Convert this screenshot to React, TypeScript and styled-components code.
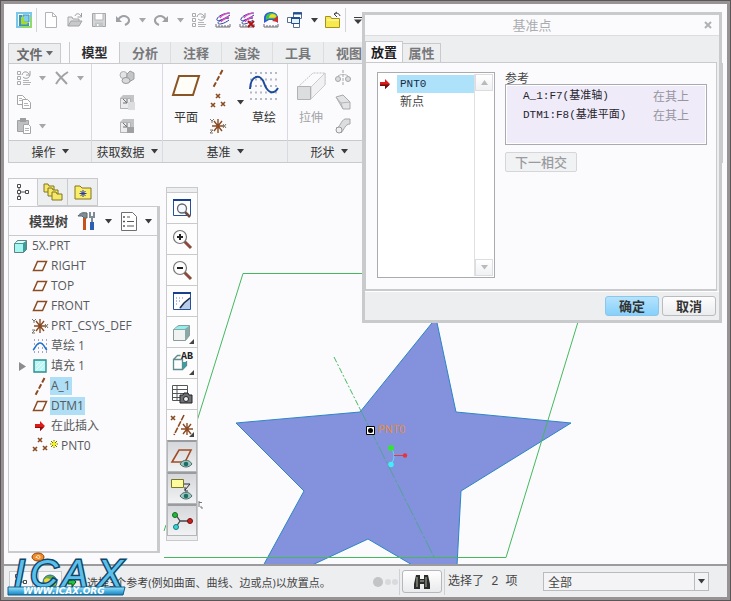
import React, { useState } from "react";
import styled, { createGlobalStyle } from "styled-components";

const GlobalStyle = createGlobalStyle`
  * { box-sizing: border-box; }
  body {
    margin: 0;
    font-family: "Open Sans", "Noto Sans CJK SC", sans-serif;
    font-size: 12px;
    color: #444;
  }
  button { font: inherit; color: inherit; padding: 0; border: 0; background: none; }
  ul { list-style: none; margin: 0; padding: 0; }
`;

const line = "#c8cacc";
const panel = "#edeef0";
const paper = "#fbfbfd";
const brown = "#8a4b22";
const cjk = `"Noto Sans CJK SC", sans-serif`;

/* ---------- window frame ---------- */

const Window = styled.div`
  position: relative;
  min-height: 100vh;
  display: flex;
  border: 1px solid #5a5658;
`;
const Frame = styled.div`
  flex: 1;
  min-width: 0;
  display: flex;
  flex-direction: column;
  border: 3px solid #979395;
  background: ${paper};
`;
const Glyph = styled.svg`
  display: block;
  flex: none;
  overflow: visible;
`;

/* ---------- quick access bar ---------- */

const QuickBar = styled.div`
  display: flex;
  align-items: center;
  height: 32px;
  padding-left: 12px;
  margin-bottom: 6px;
`;
const QuickButton = styled.button<{ $w?: number }>`
  width: ${(p) => p.$w ?? 24}px;
  height: 24px;
  flex: none;
  display: flex;
  align-items: center;
  justify-content: center;
`;
const Rule = styled.span<{ $tight?: boolean }>`
  flex: none;
  width: 1px;
  height: 24px;
  margin: ${(p) => (p.$tight ? "0" : "0 2px 0 4px")};
  background: #d4d5d8;
`;

/* ---------- ribbon ---------- */

const TabRow = styled.div`
  display: flex;
  align-items: flex-end;
  height: 22px;
  margin: 0 4px;
  border-bottom: 1px solid ${line};
  overflow: hidden;
`;
const FileButton = styled.button`
  width: 53px;
  height: 20px;
  display: flex;
  align-items: center;
  justify-content: center;
  gap: 3px;
  margin-right: 8px;
  border: 1px solid ${line};
  border-bottom: 0;
  background: ${panel};
  color: #6a6a6c;
  font: bold 13px/18px ${cjk};
`;
const RibbonTab = styled.button<{ $active?: boolean }>`
  flex: 0 0 51px;
  height: 22px;
  border: solid ${(p) => (p.$active ? line : "#dcdde0")};
  border-width: ${(p) => (p.$active ? "0 1px" : "1px 1px 0 0")};
  background: ${(p) => (p.$active ? paper : panel)};
  color: ${(p) => (p.$active ? "#2e2e30" : "#77787a")};
  font: bold 13px/20px ${cjk};
`;
const Ribbon = styled.div`
  display: flex;
  height: 99px;
  margin: 0 4px;
  border: solid ${line};
  border-width: 0 1px 1px;
`;
const Group = styled.section<{ $w?: number }>`
  ${(p) => (p.$w ? `flex: 0 0 ${p.$w}px;` : "flex: 1;")}
  min-width: 0;
  display: flex;
  flex-direction: column;
  border-right: 1px solid #d9dadd;
`;
const GroupBody = styled.div<{ $center?: boolean }>`
  flex: 1;
  display: flex;
  justify-content: ${(p) => (p.$center ? "center" : "flex-start")};
  padding: ${(p) => (p.$center ? "2px 0 0" : "2px 0 0 6px")};
`;
const GroupLabel = styled.button<{ $w?: number }>`
  width: ${(p) => (p.$w ? `${p.$w}px` : "auto")};
  height: 21px;
  display: flex;
  align-items: center;
  justify-content: center;
  gap: 6px;
  color: #333;
  font: 12px/20px ${cjk};
`;
const LabelBar = styled.div`
  display: grid;
  background: ${panel};
  border-top: 1px solid ${line};
`;
const ShapeLabelBar = styled(LabelBar)`
  justify-content: start;
`;
const Stack = styled.div`
  display: grid;
  grid-auto-rows: 24px;
  align-items: center;
  align-content: start;
`;
const StackRow = styled.div`
  display: flex;
  align-items: center;
`;
const SmallTool = styled.button<{ $w?: number }>`
  width: ${(p) => p.$w ?? 18}px;
  height: 22px;
  display: flex;
  align-items: center;
  justify-content: center;
`;
const BigTool = styled.button<{ $off?: boolean }>`
  width: 34px;
  height: 72px;
  display: flex;
  flex-direction: column;
  align-items: center;
  gap: 8px;
  padding-top: 6px;
  color: ${(p) => (p.$off ? "#a2a3a6" : "#333")};
  font: 12px/18px ${cjk};
`;
const ArrowTool = styled.button`
  width: 14px;
  height: 72px;
  display: flex;
  align-items: center;
  justify-content: center;
`;

/* ---------- workspace ---------- */

const Workspace = styled.div`
  flex: 1;
  display: flex;
  min-height: 401px;
`;
const Sidebar = styled.aside`
  flex: none;
  width: 152px;
  margin: 15px 0 11px 4px;
  display: flex;
  flex-direction: column;
`;
const SideTabs = styled.div`
  display: flex;
  height: 28px;
`;
const SideTab = styled.button<{ $active?: boolean }>`
  width: 30px;
  display: flex;
  align-items: center;
  justify-content: center;
  border: 1px solid ${line};
  border-left-width: ${(p) => (p.$active ? "1px" : "0")};
  border-bottom-color: ${(p) => (p.$active ? paper : line)};
  background: ${(p) => (p.$active ? paper : panel)};
`;
const TreePanel = styled.div`
  flex: 1;
  border: 1px solid ${line};
  border-top: 0;
  border-right-width: 3px;
  border-bottom-width: 2px;
`;
const TreeHead = styled.div`
  display: flex;
  align-items: center;
  height: 30px;
  padding-left: 20px;
  border-top: 1px solid ${line};
  border-bottom: 1px solid ${line};
`;
const TreeTitle = styled.h2`
  flex: none;
  margin: 0 9px 0 0;
  color: #444;
  white-space: nowrap;
  font: bold 13px/20px ${cjk};
`;
const TreeList = styled.ul`
  color: #58595c;
`;
const TreeItem = styled.li<{ $root?: boolean }>`
  height: 20px;
  display: flex;
  align-items: center;
  padding-left: ${(p) => (p.$root ? 4 : 0)}px;
`;
const Expander = styled.button`
  width: 23px;
  height: 16px;
  display: flex;
  align-items: center;
  justify-content: center;
  padding-left: 4px;
`;
const Indent = styled.span`
  width: 23px;
`;
const ItemText = styled.span<{ $sel?: boolean }>`
  margin-left: 2px;
  padding: 0 1px;
  line-height: 18px;
  background: ${(p) => (p.$sel ? "#aedff6" : "transparent")};
`;

const Canvas = styled.main`
  flex: 1;
  min-width: 0;
  display: grid;
  grid-template: minmax(0, 1fr) / minmax(0, 1fr);
  overflow: hidden;
`;
const Scene = styled.svg`
  grid-area: 1 / 1;
  display: block;
  width: 100%;
  height: 100%;
`;
const ViewBar = styled.div`
  grid-area: 1 / 1;
  align-self: start;
  justify-self: start;
  width: 32px;
  margin: 24px 0 0 6px;
  padding: 4px 0;
  border: 1px solid ${line};
  background: ${panel};
`;
const ViewButton = styled.button<{ $on?: boolean }>`
  width: 30px;
  height: ${(p) => (p.$on ? 32 : 31)}px;
  display: flex;
  align-items: center;
  justify-content: center;
  border: ${(p) => (p.$on ? "1px solid #b4b6ba" : "0 solid #c8cacc")};
  border-top: ${(p) => (p.$on ? "2px solid #9a9ca0" : "1px solid #c8cacc")};
  background: ${(p) => (p.$on ? "linear-gradient(#d5d7da, #f1f2f4)" : "#fdfdfe")};
`;

/* ---------- status bar ---------- */

const StatusBar = styled.footer`
  display: flex;
  align-items: center;
  height: 33px;
  border-top: 2px solid #9b9b9d;
  background: ${panel};
`;
const StatusMessage = styled.p`
  flex: 0 0 auto;
  width: 285px;
  margin: 0 0 0 5px;
  white-space: nowrap;
  font-size: 11px;
`;
const StatusRule = styled.span`
  width: 1px;
  height: 26px;
  background: #cfd0d3;
`;
const StatusIcon = styled.button<{ $w: number; $box?: boolean }>`
  width: ${(p) => p.$w}px;
  height: 22px;
  margin-left: ${(p) => (p.$box ? 5 : 0)}px;
  display: flex;
  align-items: center;
  justify-content: center;
  border: ${(p) => (p.$box ? 1 : 0)}px solid ${line};
  background: ${(p) => (p.$box ? "#f8f8fa" : "transparent")};
`;
const FindButton = styled.button`
  width: 40px;
  height: 23px;
  margin: 0 2px;
  display: flex;
  align-items: center;
  justify-content: center;
  border: 1px solid #b5b7ba;
  border-radius: 3px;
  background: linear-gradient(#fff, #e9eaec);
`;
const SelectedCount = styled.span`
  flex: 1;
  padding-left: 3px;
  white-space: nowrap;
  font: 12px/18px "Liberation Mono", ${cjk};
`;
const FilterBox = styled.label`
  display: grid;
  align-items: center;
  width: 166px;
  margin-right: 18px;
`;
const FilterSelect = styled.select`
  grid-area: 1 / 1;
  width: 100%;
  height: 19px;
  padding: 0 20px 0 4px;
  appearance: none;
  border: 1px solid #b9bbbe;
  border-radius: 0;
  background: #f4f4f6;
  color: #444;
  font: 12px/16px ${cjk};
`;
const FilterArrow = styled.span`
  grid-area: 1 / 1;
  justify-self: end;
  width: 15px;
  height: 19px;
  display: flex;
  align-items: center;
  justify-content: center;
  border: 1px solid #b9bbbe;
  background: #f2f3f5;
  pointer-events: none;
`;
const Brand = styled.svg`
  position: absolute;
  left: 4px;
  bottom: 2px;
  overflow: visible;
  pointer-events: none;
`;

/* ---------- datum point dialog ---------- */

const Dialog = styled.section`
  position: absolute;
  top: 11px;
  right: 8px;
  width: 360px;
  display: flex;
  flex-direction: column;
  border: 3px solid ${line};
  background: ${panel};
`;
const DialogTitle = styled.header`
  display: grid;
  align-items: center;
  height: 21px;
  border-bottom: 1px solid #dcdde0;
  background: ${paper};
`;
const DialogName = styled.h1`
  grid-area: 1 / 1;
  justify-self: center;
  margin: 0 20px 0 0;
  color: #aaacaf;
  font: 13px/20px ${cjk};
`;
const CloseButton = styled.button`
  grid-area: 1 / 1;
  justify-self: end;
  width: 22px;
  height: 20px;
  display: flex;
  align-items: center;
  justify-content: center;
`;
const DialogTabs = styled.div`
  display: flex;
  align-items: flex-end;
  height: 26px;
`;
const DialogTab = styled.button<{ $active?: boolean }>`
  width: 38px;
  height: ${(p) => (p.$active ? 21 : 19)}px;
  border: 1px solid ${line};
  border-width: ${(p) => (p.$active ? "1px 1px 0" : "1px 1px 0 0")};
  background: ${(p) => (p.$active ? paper : panel)};
  color: ${(p) => (p.$active ? "#1c1c1e" : "#77787a")};
  font: bold 13px/18px ${cjk};
`;
const DialogBody = styled.div`
  display: flex;
  gap: 10px;
  height: 229px;
  margin: 0 2px 0 0;
  padding: 9px 9px 11px 11px;
  border: 1px solid ${line};
  border-bottom-width: 2px;
  background: ${paper};
`;
const PointList = styled.div`
  flex: none;
  width: 118px;
  display: flex;
  border: 1px solid #a9abae;
  padding: 1px;
  background: #fff;
`;
const Points = styled.ul`
  flex: 1;
`;
const Point = styled.li`
  display: grid;
  grid-template-columns: 18px 1fr;
  align-items: center;
  height: 19px;
  color: #444;
  font: 12px/18px "Liberation Mono", ${cjk};
`;
const PointName = styled.span<{ $sel?: boolean; $mono?: boolean }>`
  padding-left: 3px;
  font-size: ${(p) => (p.$mono ? 11 : 12)}px;
  color: ${(p) => (p.$sel ? "#1b2a44" : "#444")};
  background: ${(p) => (p.$sel ? "#aee2fb" : "transparent")};
`;
const ScrollTrack = styled.div`
  width: 19px;
  display: flex;
  flex-direction: column;
  justify-content: space-between;
  border-left: 1px solid #dfe0e3;
`;
const ScrollButton = styled.button`
  height: 17px;
  display: flex;
  align-items: center;
  justify-content: center;
  border: 1px solid #dcdde0;
  background: linear-gradient(#fff, #f0f1f3);
`;
const RefColumn = styled.div`
  flex: 1;
  display: flex;
  flex-direction: column;
  align-items: flex-start;
  font: 12px/12px ${cjk};
`;
const RefTitle = styled.h3`
  margin: 0;
  color: #444;
  font: 12px/12px ${cjk};
`;
const RefTable = styled.table`
  width: 100%;
  height: 61px;
  margin-bottom: 7px;
  padding: 1px 13px 20px 17px;
  border: 1px solid #a9abae;
  border-spacing: 0;
  background: #efebf8;
  box-shadow: inset 0 0 0 1px #fff;
`;
const RefName = styled.td`
  padding: 0;
  white-space: nowrap;
  color: #26242e;
  font: 11px/18px "Liberation Mono", ${cjk};
`;
const RefKind = styled.td`
  padding: 0;
  width: 40px;
  color: #97959f;
  font: 12px/18px ${cjk};
`;
const NextButton = styled.button`
  width: 72px;
  height: 20px;
  border: 1px solid #d5d6d9;
  border-radius: 2px;
  background: #f1f2f4;
  color: #9a9b9e;
  font: 500 13px/18px ${cjk};
`;
const DialogFooter = styled.footer`
  display: flex;
  justify-content: flex-end;
  align-items: center;
  gap: 3px;
  height: 29px;
  padding-right: 3px;
  border-top: 1px solid #fff;
`;
const DialogButton = styled.button<{ $primary?: boolean }>`
  width: 54px;
  height: 20px;
  border: 1px solid ${(p) => (p.$primary ? "#8cc7ea" : "#b9bbbe")};
  border-radius: 3px;
  background: ${(p) =>
    p.$primary ? "linear-gradient(#b5e3fd, #86d0fb)" : "linear-gradient(#fdfdfe, #ebecee)"};
  color: #333;
  font: bold 13px/18px ${cjk};
`;

/* ---------- icons ---------- */

type IconProps = { children: React.ReactNode; w?: number; h?: number };
const Icon = ({ children, w = 16, h = 16 }: IconProps) => (
  <Glyph width={w} height={h} viewBox={`0 0 ${w} ${h}`} fill="none" aria-hidden="true">
    {children}
  </Glyph>
);
const Down = ({ c = "#3c3c3e" }: { c?: string }) => (
  <Icon w={7} h={5}>
    <path d="M0 0h7L3.500 4.500z" fill={c} />
  </Icon>
);
const AppIcon = () => (
  <Icon>
    <path d="M0 0h16v16H0z" fill="#8edb6a" />
    <path d="M0 0h16v5H5v11H0z" fill="#7cc6ea" />
    <path d="M2 2h12v12H2z" fill="#f2fae8" />
    <path d="M3 3h3v8h7v3H3z" fill="#3d8fc4" />
    <path d="M7 3h6v7H7z" fill="#7fd0f0" stroke="#3d8fc4" />
    <path d="M6.500 5v6h5" stroke="#a6dc28" strokeWidth="3" />
  </Icon>
);
const NewIcon = () => (
  <Icon>
    <path d="M2.500.5h7l4 4v11h-11z" fill="#fff" stroke="#b2b3b5" />
    <path d="M9.500.5v4h4" stroke="#b2b3b5" />
  </Icon>
);
const OpenIcon = () => (
  <Icon>
    <path d="M1 14V5h4l1 2h6v2" fill="#e4e5e6" stroke="#a3a4a6" />
    <path d="M1 14l3-5h11l-3 5z" fill="#c8c9ca" stroke="#a3a4a6" />
    <path d="M8 4c1-3 4-3 6 0m.5-3v4h-4" stroke="#9c9d9f" />
  </Icon>
);
const SaveIcon = () => (
  <Icon>
    <path d="M1.500 1.500h13v13h-13z" fill="#d4d5d7" stroke="#a5a6a8" />
    <path d="M4 1.500h8V8H4z" fill="#fff" stroke="#b4b5b7" />
    <path d="M4 10.500h8v4H4z" fill="#c3c4c6" />
    <path d="M6 12h1.500v2H6z" fill="#fff" />
  </Icon>
);
const Undo = ({ flip }: { flip?: boolean }) => (
  <Icon>
    <g transform={flip ? "matrix(-1 0 0 1 16 0)" : undefined}>
      <path d="M3 8c2-4 6-5 9-3s3 6-2 8" stroke="#9fa0a3" strokeWidth="2" />
      <path d="M1 4v6h6z" fill="#9fa0a3" />
    </g>
  </Icon>
);
const RegenIcon = () => (
  <Icon>
    <path d="M1.500 1.500h3v3h-3zM1.500 6.500h3v3h-3zM1.500 11.500h3v3h-3z" stroke="#a9aaac" />
    <path d="M7 10.500h6M7 12.500h8M7 14.500h7" stroke="#b3b4b6" />
    <path d="M6 5c1-4 5-4 7-1m1-3v4h-4M14 5c-1 4-5 4-7 2" stroke="#9b9c9f" />
  </Icon>
);
const SketchView = ({ off }: { off?: boolean }) => (
  <Icon>
    <path d="M15 1C9 1 3 4 2 7s4 2 13-4M14 6C8 7 3 9 3 11s6 1 11-3" stroke="#2d3f9e" />
    <path d="M14 1c-5 1-8 3-9 5m9-1c-4 1-7 3-8 5" stroke="#d94bc4" strokeWidth="1.500" />
    <path d="M1 12v3h14v-3M4 15v-2M7 15v-2M10 15v-2M13 15v-2" stroke="#6c6d72" />
    {off && <path d="M9 9l6 6M15 9l-6 6" stroke="#b01010" strokeWidth="2" />}
  </Icon>
);
const ColorIcon = () => (
  <Icon>
    <path d="M1 11V6c0-8 14-8 14 0v5l-4-3H6z" fill="#3559d8" />
    <path d="M3 8C1 0 12-1 14 4c-1 5-7 1-11 4z" fill="#38c74c" />
    <path d="M6 6c0-5 6-5 7-2 0 3-5 1-7 2z" fill="#f0dc2c" />
    <path d="M9 9l6-5v6z" fill="#d82c2c" />
    <path d="M1 12v3h14v-3M4 15v-2M7 15v-2M10 15v-2M13 15v-2" stroke="#6c6d72" />
  </Icon>
);
const WindowsIcon = () => (
  <Icon>
    <path d="M6.500.5h8v6h-8zM.5 5.500h8v5h-8zM6.500 9.500h6v6h-6z" fill="#fff" stroke="#5a6d8f" />
    <path d="M4.500 5.500h8v6h-8z" fill="#e7f1fb" stroke="#1f4f96" />
    <path d="M4 6h9M6 1.500h9" stroke="#1f4f96" strokeWidth="2" />
  </Icon>
);
const FolderUp = () => (
  <Icon>
    <path d="M.5 15.500v-11h5l1 2h8v9z" fill="#f7ea4e" stroke="#a59120" />
    <path d="M2 8h12" stroke="#fffbb8" />
    <path d="M15 4c-1-3-3-3-5-2m2-2l-3 2 3 3" stroke="#3f3f3f" />
  </Icon>
);
const OverflowIcon = () => (
  <Icon w={8} h={7}>
    <path d="M0 2.500h8L4 7z" fill="#3c3c3e" />
    <path d="M0 .5h8" stroke="#3c3c3e" />
  </Icon>
);
const DeleteIcon = () => (
  <Icon>
    <path d="M2 2l11 12M14 2C9 5 5 9 2 14" stroke="#a1a2a5" strokeWidth="2" />
  </Icon>
);
const CopyIcon = () => (
  <Icon>
    <path d="M1.500 1.500h5l3 3v6h-8z" fill="#fff" stroke="#a4a5a7" />
    <path d="M6.500 5.500h5l3 3v6h-8z" fill="#fff" stroke="#a4a5a7" />
    <path d="M3 4.500h3M3 6.500h3M8 9.500h4M8 11.500h5" stroke="#b4b5b7" />
  </Icon>
);
const PasteIcon = () => (
  <Icon>
    <path d="M1.500 2.500h11v11h-11z" fill="#bfc0c2" stroke="#a0a1a3" />
    <path d="M4 0h6v4H4z" fill="#9d9ea0" />
    <path d="M7.500 6.500h5l2 2v7h-7z" fill="#fff" stroke="#a4a5a7" />
    <path d="M9 10.500h4M9 12.500h4" stroke="#b4b5b7" />
  </Icon>
);
const ShapesIcon = () => (
  <Icon>
    <circle cx="4.500" cy="5" r="3.500" fill="#e3e4e6" stroke="#aeafb1" />
    <path d="M8 4l3-3 4 2v6l-5 3-2-2z" fill="#c4c5c7" stroke="#9c9d9f" />
    <ellipse cx="7" cy="10.500" rx="4" ry="3" fill="#d8d9db" stroke="#98999b" />
  </Icon>
);
const ImportIcon = ({ solid }: { solid?: boolean }) => (
  <Icon>
    <path d="M1 4l3-3h11v11l-3 3H1z" fill="#c3c4c6" />
    <path d="M1.500 4.500h10v10h-10z" fill="#ececee" stroke="#b2b3b5" />
    <path d={solid ? "M8 9h7v6H8z" : "M9 8h7v8H9z"} fill={solid ? "#9fa0a2" : "#dcdddf"} />
    <path d="M4 5l4 4m0-4v4H4" stroke="#707174" />
  </Icon>
);
const PlaneLarge = () => (
  <Icon w={30} h={28}>
    <path d="M8 4h20l-6 19H2z" fill="#fffdf7" stroke="#8a5424" strokeWidth="2" />
  </Icon>
);
const AxisIcon = ({ c = brown }: { c?: string }) => (
  <Icon>
    <path d="M12.500 0L3.500 17" stroke={c} strokeWidth="2" strokeDasharray="5 2" />
  </Icon>
);
const PointsIcon = () => (
  <Icon>
    <path d="M6 0l4 4m0-4L6 4M1 9l4 4m0-4l-4 4M11 8l4 4m0-4l-4 4" stroke={brown} strokeWidth="1.600" />
  </Icon>
);
const CsysIcon = () => (
  <Icon>
    <path d="M8 1v14M2 8h12M4 3l8 10M12 3L4 13" stroke={brown} strokeWidth="1.400" />
    <path d="M0 1l2 2 2-2M2 3v2M0 12h3l-3 3h3M13 6l3 4m0-4l-3 4" stroke="#7b7367" />
  </Icon>
);
const SketchLarge = () => (
  <Icon w={30} h={28}>
    <g fill="#b4bac6">
      {[0, 1, 2, 3, 4].map((r) =>
        [0, 1, 2, 3, 4, 5].map((c) => (
          <path key={`${r}-${c}`} d={`M${1 + c * 5} ${r * 6.5}h2v2h-2z`} />
        )),
      )}
    </g>
    <path d="M1 17C2 2 12 2 15 11s9 13 14 5" stroke="#1e4a9c" strokeWidth="2" />
  </Icon>
);
const ExtrudeLarge = () => (
  <Icon w={30} h={28}>
    <path d="M2 15L17 1h12v12L15 27" stroke="#bdbec0" strokeDasharray="2 1" />
    <path d="M15 15L29 1v12L15 27z" fill="#f1f1f3" stroke="#cbccce" />
    <path d="M1.500 14.500h13v13h-13z" fill="#dcdddf" stroke="#b1b2b4" />
  </Icon>
);
const RevolveIcon = () => (
  <Icon>
    <path d="M8 0v16" stroke="#a4a5a7" strokeDasharray="3 1" />
    <circle cx="3" cy="9" r="2.500" fill="#dcdddf" stroke="#a4a5a7" />
    <circle cx="13" cy="9" r="2.500" fill="#dcdddf" stroke="#a4a5a7" />
    <path d="M3 6c2-2 8-2 10 0" stroke="#b4b5b7" />
  </Icon>
);
const BlendIcon = () => (
  <Icon>
    <path d="M1 3l7-2 7 7v7H8z" fill="#e2e3e5" stroke="#a8a9ab" />
    <path d="M1 3l5 6 9-1M6 9l2 6" stroke="#b4b5b7" />
  </Icon>
);
const SweepIcon = () => (
  <Icon>
    <path d="M1 10C5 10 6 2 10 1h5v5c-5 0-6 6-9 9z" fill="#dcdddf" stroke="#a4a5a7" />
    <circle cx="4" cy="12" r="3" fill="#efeff1" stroke="#97989a" />
  </Icon>
);
const TreeTabIcon = () => (
  <Icon>
    <path d="M2.500.5h3v3h-3zM2.500 6.500h3v3h-3zM2.500 12.500h3v3h-3zM10.500 6.500h3v3h-3z" fill="#fff" stroke="#4a4a4c" />
    <path d="M4 4v2.500M4 9.500v3M6 8h4" stroke="#4a4a4c" />
  </Icon>
);
const FoldersIcon = () => (
  <Icon w={20} h={20}>
    {[0, 4, 8].map((o) => (
      <path key={o} d={`M${1 + o} ${10 + o}V${2 + o}h4l1 2h5v6z`} fill="#f4e96a" stroke="#84741f" />
    ))}
  </Icon>
);
const FavouriteIcon = () => (
  <Icon w={18} h={16}>
    <path d="M1 15V2h5l2 2h9v11z" fill="#f8ee68" stroke="#84741f" />
    <path d="M9 6v7M5.500 9.500h7M6.500 7l5 5M11.500 7l-5 5" stroke="#2736a8" />
  </Icon>
);
const ToolsIcon = () => (
  <Icon w={20} h={20}>
    <path d="M1 5c2-3 5-4 9-3v5H7L5 5z" fill="#7d8f93" stroke="#57676b" />
    <path d="M7.500 7v12" stroke="#c4541c" strokeWidth="3" />
    <path d="M13 1v5h4V1" stroke="#7e8b94" strokeWidth="2" />
    <path d="M15 6v6" stroke="#7e8b94" strokeWidth="2" />
    <path d="M15 11v8" stroke="#2a5fb4" strokeWidth="4" />
  </Icon>
);
const ListIcon = () => (
  <Icon w={16} h={19}>
    <path d="M.5.5h11l4 4v14H.5z" fill="#fff" stroke="#6d6e70" />
    <path d="M6 5h3M6 9.500h7M6 14h7" stroke="#55565a" />
    <path d="M2.500 4.500h1v1h-1zM2.500 9h1v1h-1zM2.500 13.500h1v1h-1z" stroke="#55565a" />
  </Icon>
);
const PartIcon = () => (
  <Icon>
    <path d="M1.500 5.500l3-3h9v9l-3 3h-9z" fill="#3f9a98" stroke="#5f8384" />
    <path d="M2 6h8v8H2z" fill="#a6f6f2" />
    <path d="M2 5l3-2h8l-3 2z" fill="#e3ffff" />
  </Icon>
);
const PlaneIcon = () => (
  <Icon>
    <path d="M5.500 3.500h9l-4 9h-9z" stroke={brown} strokeWidth="1.500" />
  </Icon>
);
const SketchIcon = () => (
  <Icon>
    <path d="M2 2h14M2 6h14M2 10h14M2 14h14" stroke="#4b5a78" strokeDasharray="1 3" />
    <path d="M1 12c2-1 3-7 7-7s5 6 7 7" stroke="#1e6fd0" strokeWidth="1.600" />
  </Icon>
);
const FillIcon = () => (
  <Icon>
    <path d="M2 2h12v12H2z" fill="#b9f6f4" stroke="#2b8d90" strokeWidth="1.400" />
    <path d="M4 8l4-4M4 12l8-8M8 12l4-4" stroke="#e6ffff" />
  </Icon>
);
const RedArrow = () => (
  <Icon w={12} h={12}>
    <path d="M1 4h5V1l5 5-5 5V8H1z" fill="#e01818" />
    <path d="M1 6.500h10L6 11V8H1z" fill="#6a1010" />
  </Icon>
);
const InsertArrow = () => (
  <Icon>
    <path d="M3 6h5V3l5 5-5 5v-3H3z" fill="#e01818" />
    <path d="M3 9h9l-4 4v-3H3z" fill="#8a1010" />
  </Icon>
);
const Spark = () => (
  <Icon w={10} h={14}>
    <path d="M6 1v8M2 5h8M3 2l6 6M9 2L3 8" stroke="#6d6b10" />
    <path d="M6 2v6M3 5h6" stroke="#f4f01c" strokeWidth="2" />
  </Icon>
);

const Lens = ({ sign }: { sign?: string }) => (
  <Icon w={20} h={20}>
    <path d="M12 12l7 7" stroke="#8a4a3c" strokeWidth="3" />
    <circle cx="8" cy="8" r="6.500" fill="#fdfdfd" stroke="#77777a" strokeWidth="1.200" />
    <path d={sign} stroke="#222" strokeWidth="2" />
  </Icon>
);
const FitIcon = () => (
  <Icon w={20} h={20}>
    <path d="M1.500 2.500h17v15h-17z" fill="#fff" stroke="#26509c" />
    <path d="M1 2h18" stroke="#17408f" strokeWidth="2" />
    <path d="M13 14l5 5" stroke="#6d4a3c" strokeWidth="2.500" />
    <circle cx="10" cy="10.500" r="4.500" fill="#f4f8ff" stroke="#66676b" strokeWidth="1.300" />
  </Icon>
);
const RepaintIcon = () => (
  <Icon w={20} h={20}>
    <path d="M1.500 2.500h17v16h-17z" fill="#fff" stroke="#26509c" />
    <path d="M1 2h18" stroke="#17408f" strokeWidth="2" />
    <path d="M7 18L18 6v12z" fill="#b8cde8" />
    <path d="M8 17l4-5 6-5" stroke="#1b2c50" strokeWidth="1.600" />
    <path d="M4 7h8M4 10h6M4 13h3" stroke="#5f83b8" strokeDasharray="1 2" />
  </Icon>
);
const Corner = () => <path d="M24 19v5h-5z" fill="#444" />;
const CubeIcon = () => (
  <Icon w={24} h={24}>
    <path d="M3.500 9.500l5-4h11v10l-4 5h-12z" fill="#8aa8a8" stroke="#8b9c9e" />
    <path d="M4 10h11v10H4z" fill="#f1f3f3" />
    <path d="M4 9l5-3h10l-4 3z" fill="#8ff0ee" />
    <Corner />
  </Icon>
);
const NamedViewIcon = () => (
  <Icon w={24} h={24}>
    <path d="M3.500 8.500h9v10h-9zM3.500 8.500l4-4h3M12.500 18.500l4-4V10" fill="none" stroke="#5f8c90" strokeWidth="1.300" />
    <path d="M13 18l3-3v-4h-3z" fill="#3a9fa0" />
    <text x="11" y="8" fontFamily="Liberation Mono" fontWeight="bold" fontSize="10" fill="#222">AB</text>
    <Corner />
  </Icon>
);
const CaptureIcon = () => (
  <Icon w={22} h={22}>
    <path d="M1.500 2.500h15v15h-15zM1.500 6.500h15M1.500 10.500h15M1.500 14.500h15M6 2.500v15" fill="#fff" stroke="#55565a" />
    <path d="M9 12h3l1-2h4l1 2h3v8H9z" fill="#6f7073" stroke="#222" />
    <circle cx="15" cy="16" r="2.500" fill="#f2f2f2" stroke="#222" />
  </Icon>
);
const DatumIcon = () => (
  <Icon w={24} h={24}>
    <path d="M1 3l4 4m0-4L1 7M14 2L4 22" stroke={brown} strokeWidth="1.600" strokeDasharray="6 1" />
    <path d="M17 10v12M11 16h12M13 11l8 10M21 11l-8 10" stroke={brown} strokeWidth="1.400" />
    <Corner />
  </Icon>
);
const Eye = () => (
  <g>
    <path d="M10 19c3-5 9-5 12 0-3 4-9 4-12 0z" fill="#9bc7c0" stroke="#4f6c68" />
    <circle cx="16" cy="19" r="2.300" fill="#1d6d66" />
  </g>
);
const PlaneViewIcon = () => (
  <Icon w={24} h={24}>
    <path d="M9 5h12l-6 12H2z" stroke="#a04c26" strokeWidth="1.600" />
    <Eye />
  </Icon>
);
const NoteViewIcon = () => (
  <Icon w={24} h={24}>
    <path d="M1.500 2.500h12v8h-12z" fill="#fdfb9c" stroke="#77762c" />
    <path d="M14 7h6l-5 6m0-3v4h3" stroke="#2c2c2e" />
    <Eye />
  </Icon>
);
const SpinIcon = () => (
  <Icon w={24} h={24}>
    <path d="M6 6l4 6-4 6M10 12h10" stroke="#44484c" strokeWidth="1.300" />
    <circle cx="5" cy="6" r="2.500" fill="#22b83a" stroke="#146b22" />
    <circle cx="6" cy="18" r="2.500" fill="#35d6dc" stroke="#187a7e" />
    <circle cx="20" cy="12" r="2.500" fill="#cc1f1f" stroke="#701010" />
  </Icon>
);
const Binoculars = () => (
  <Icon w={18} h={16}>
    <path d="M3 1h4v4h4V1h4l2 9v5h-6v-5H7v5H1v-5z" fill="#2b2d2a" />
    <path d="M4 3v10M13 3v10" stroke="#aeb3a4" />
    <path d="M7 7h4" stroke="#73786c" strokeWidth="2" />
  </Icon>
);

/* ---------- sections ---------- */

const quickTools = [
  { name: "新建", icon: <NewIcon /> },
  { name: "打开", icon: <OpenIcon /> },
  { name: "保存", icon: <SaveIcon /> },
  { name: "撤消", icon: <Undo /> },
  { name: "撤消列表", icon: <Down c="#a6a7aa" />, w: 14 },
  { name: "重做", icon: <Undo flip /> },
  { name: "重做列表", icon: <Down c="#a6a7aa" />, w: 14 },
  { name: "重新生成", icon: <RegenIcon /> },
  { name: "草绘视图", icon: <SketchView /> },
  { name: "关闭草绘视图", icon: <SketchView off /> },
  { name: "外观", icon: <ColorIcon /> },
  { name: "窗口", icon: <WindowsIcon /> },
  { name: "窗口列表", icon: <Down />, w: 14 },
  { name: "关闭", icon: <FolderUp /> },
];

const Quick = () => (
  <QuickBar>
    <AppIcon />
    <Rule />
    {quickTools.map((q) => (
      <QuickButton key={q.name} aria-label={q.name} $w={q.w}>
        {q.icon}
      </QuickButton>
    ))}
    <Rule $tight />
    <QuickButton aria-label="自定义">
      <OverflowIcon />
    </QuickButton>
  </QuickBar>
);

const gray = "#a6a7aa";

const RibbonArea = () => (
  <>
    <TabRow>
      <FileButton>
        文件
        <Down c="#6a6a6c" />
      </FileButton>
      {["模型", "分析", "注释", "渲染", "工具", "视图"].map((t, i) => (
        <RibbonTab key={t} $active={i === 0}>
          {t}
        </RibbonTab>
      ))}
    </TabRow>
    <Ribbon>
      <Group $w={83}>
        <GroupBody>
          <Stack>
            <StackRow>
              <SmallTool aria-label="重新生成"><RegenIcon /></SmallTool>
              <SmallTool aria-label="重新生成选项"><Down c={gray} /></SmallTool>
              <SmallTool aria-label="删除" $w={22}><DeleteIcon /></SmallTool>
              <SmallTool aria-label="删除选项" $w={14}><Down c={gray} /></SmallTool>
            </StackRow>
            <StackRow>
              <SmallTool aria-label="复制"><CopyIcon /></SmallTool>
            </StackRow>
            <StackRow>
              <SmallTool aria-label="粘贴"><PasteIcon /></SmallTool>
              <SmallTool aria-label="粘贴选项"><Down c={gray} /></SmallTool>
            </StackRow>
          </Stack>
        </GroupBody>
        <LabelBar><GroupLabel>操作<Down /></GroupLabel></LabelBar>
      </Group>
      <Group $w={71}>
        <GroupBody $center>
          <Stack>
            <SmallTool aria-label="用户定义特征"><ShapesIcon /></SmallTool>
            <SmallTool aria-label="复制几何"><ImportIcon /></SmallTool>
            <SmallTool aria-label="收缩包络"><ImportIcon solid /></SmallTool>
          </Stack>
        </GroupBody>
        <LabelBar><GroupLabel>获取数据<Down /></GroupLabel></LabelBar>
      </Group>
      <Group $w={125}>
        <GroupBody>
          <BigTool><PlaneLarge />平面</BigTool>
          <Stack>
            <SmallTool aria-label="轴" $w={30}><AxisIcon /></SmallTool>
            <SmallTool aria-label="点" $w={30}><PointsIcon /></SmallTool>
            <SmallTool aria-label="坐标系" $w={30}><CsysIcon /></SmallTool>
          </Stack>
          <ArrowTool aria-label="点选项"><Down /></ArrowTool>
          <BigTool><SketchLarge />草绘</BigTool>
        </GroupBody>
        <LabelBar><GroupLabel>基准<Down /></GroupLabel></LabelBar>
      </Group>
      <Group>
        <GroupBody>
          <BigTool $off><ExtrudeLarge />拉伸</BigTool>
          <Stack>
            <SmallTool aria-label="旋转" $w={30}><RevolveIcon /></SmallTool>
            <SmallTool aria-label="混合" $w={30}><BlendIcon /></SmallTool>
            <SmallTool aria-label="扫描" $w={30}><SweepIcon /></SmallTool>
          </Stack>
          <ArrowTool aria-label="混合选项"><Down c={gray} /></ArrowTool>
        </GroupBody>
        <ShapeLabelBar><GroupLabel $w={82}>形状<Down /></GroupLabel></ShapeLabelBar>
      </Group>
    </Ribbon>
  </>
);

const treeRows = [
  { text: "RIGHT", icon: <PlaneIcon /> },
  { text: "TOP", icon: <PlaneIcon /> },
  { text: "FRONT", icon: <PlaneIcon /> },
  { text: "PRT_CSYS_DEF", icon: <CsysIcon /> },
  { text: "草绘 1", icon: <SketchIcon /> },
  { text: "填充 1", icon: <FillIcon />, expand: true },
  { text: "A_1", icon: <AxisIcon />, sel: true },
  { text: "DTM1", icon: <PlaneIcon />, sel: true },
  { text: "在此插入", icon: <InsertArrow /> },
  { text: "PNT0", icon: <PointsIcon />, spark: true },
];

const ModelTree = () => (
  <Sidebar>
    <SideTabs>
      <SideTab $active aria-label="模型树"><TreeTabIcon /></SideTab>
      <SideTab aria-label="文件夹浏览器"><FoldersIcon /></SideTab>
      <SideTab aria-label="收藏夹"><FavouriteIcon /></SideTab>
    </SideTabs>
    <TreePanel>
      <TreeHead>
        <TreeTitle>模型树</TreeTitle>
        <QuickButton aria-label="设置" $w={20}><ToolsIcon /></QuickButton>
        <QuickButton aria-label="设置选项" $w={22}><Down /></QuickButton>
        <QuickButton aria-label="显示" $w={20}><ListIcon /></QuickButton>
        <QuickButton aria-label="显示选项" $w={18}><Down /></QuickButton>
      </TreeHead>
      <TreeList>
        <TreeItem $root>
          <PartIcon />
          <ItemText>5X.PRT</ItemText>
        </TreeItem>
        {treeRows.map((r) => (
          <TreeItem key={r.text}>
            {r.expand ? (
              <Expander aria-label="展开">
                <Icon w={7} h={9}><path d="M0 0l7 4.500L0 9z" fill="#8b8c8f" /></Icon>
              </Expander>
            ) : (
              <Indent />
            )}
            {r.icon}
            {r.spark && <Spark />}
            <ItemText $sel={r.sel}>{r.text}</ItemText>
          </TreeItem>
        ))}
      </TreeList>
    </TreePanel>
  </Sidebar>
);

const viewTools = [
  { name: "重新调整", icon: <FitIcon /> },
  { name: "放大", icon: <Lens sign="M8 5v6M5 8h6" /> },
  { name: "缩小", icon: <Lens sign="M5 8h6" /> },
  { name: "重画", icon: <RepaintIcon /> },
  { name: "显示样式", icon: <CubeIcon /> },
  { name: "已命名视图", icon: <NamedViewIcon /> },
  { name: "视图管理器", icon: <CaptureIcon /> },
  { name: "基准显示", icon: <DatumIcon /> },
  { name: "平面显示", icon: <PlaneViewIcon />, on: true },
  { name: "注释显示", icon: <NoteViewIcon />, on: true },
  { name: "旋转中心", icon: <SpinIcon />, on: true },
];

const Model = () => (
  <Scene viewBox="160 163 567 401" preserveAspectRatio="xMinYMin slice" fill="none">
    <path
      d="M436 318L456 412L571 423L461 491L457 566H414L368 539L310 566H263L304 491L236 423L360 412z"
      fill="#8491dc"
      stroke="#2c86c4"
    />
    <path d="M164 557.500H506L596 263M164 531l2-6M190 443.500L243 273.500H600" stroke="#43b95e" />
    <path d="M334 357l26 52" stroke="#43b95e" strokeDasharray="6 2 2 2" />
    <path d="M360 409l74 148" stroke="#4fa493" strokeDasharray="14 2 3 2" />
    <path d="M366.500 426.500h8v8h-8z" fill="#fff" stroke="#000" />
    <circle cx="370.500" cy="430.500" r="2.500" fill="#000" />
    <text x="378" y="433" fontFamily="Open Sans" fontSize="11" fill="#ee8a2c">PNT0</text>
    <path d="M391 448c4 5 4 11 0 16" stroke="#5fdcf2" />
    <path d="M394 455.500h11" stroke="#e23a44" />
    <circle cx="391" cy="448" r="3" fill="#35e23c" />
    <circle cx="391" cy="464.500" r="2.700" fill="#42eefc" />
    <circle cx="405" cy="455.500" r="2.200" fill="#e8333d" />
    <path d="M199 501v6M199 502.500h3M201 506v2h2" stroke="#77787a" />
  </Scene>
);

const PlacementDialog = () => {
  const [tab, setTab] = useState(0);
  return (
    <Dialog role="dialog" aria-label="基准点">
      <DialogTitle>
        <DialogName>基准点</DialogName>
        <CloseButton aria-label="关闭">
          <Icon w={8} h={8}><path d="M1 1l6 6M7 1L1 7" stroke="#b0b1b4" strokeWidth="2" /></Icon>
        </CloseButton>
      </DialogTitle>
      <DialogTabs>
        {["放置", "属性"].map((t, i) => (
          <DialogTab key={t} $active={tab === i} onClick={() => setTab(i)}>
            {t}
          </DialogTab>
        ))}
      </DialogTabs>
      <DialogBody>
        <PointList>
          <Points>
            <Point>
              <RedArrow />
              <PointName $sel $mono>PNT0</PointName>
            </Point>
            <Point>
              <span />
              <PointName>新点</PointName>
            </Point>
          </Points>
          <ScrollTrack>
            <ScrollButton aria-label="向上">
              <Icon w={7} h={5}><path d="M0 5h7L3.500 0z" fill="#b9babd" /></Icon>
            </ScrollButton>
            <ScrollButton aria-label="向下"><Down c="#b9babd" /></ScrollButton>
          </ScrollTrack>
        </PointList>
        <RefColumn>
          <RefTitle id="refs">参考</RefTitle>
          <RefTable aria-labelledby="refs">
            <tbody>
              <tr>
                <RefName>A_1:F7(基准轴)</RefName>
                <RefKind>在其上</RefKind>
              </tr>
              <tr>
                <RefName>DTM1:F8(基准平面)</RefName>
                <RefKind>在其上</RefKind>
              </tr>
            </tbody>
          </RefTable>
          <NextButton disabled>下一相交</NextButton>
        </RefColumn>
      </DialogBody>
      <DialogFooter>
        <DialogButton $primary>确定</DialogButton>
        <DialogButton>取消</DialogButton>
      </DialogFooter>
    </Dialog>
  );
};

const BrandLogo = () => (
  <Brand width="124" height="46" viewBox="5 551 124 46" role="img" aria-label="ICAX">
    <defs>
      <linearGradient id="tube" x1="0" y1="0" x2="0" y2="1">
        <stop offset="0" stopColor="#a6e2fa" />
        <stop offset="0.500" stopColor="#4bb4e4" />
        <stop offset="1" stopColor="#1d7fb8" />
      </linearGradient>
    </defs>
    <g
      fontFamily="Liberation Sans"
      fontStyle="italic"
      fontSize="39"
      fill="#5cbfea"
      stroke="#0e4568"
      strokeWidth="3"
      paintOrder="stroke"
    >
      <text x="14" y="586">I</text>
      <text x="30" y="586">C</text>
      <text x="62" y="586">A</text>
      <text x="97" y="586">X</text>
    </g>
    <path d="M8 586h117l-2 8H8z" fill="url(#tube)" stroke="#0e5c88" />
    <ellipse cx="38" cy="556" rx="6" ry="4" fill="#f08c2a" stroke="#8c3f0c" />
    <path d="M36 557c0-3 4-3 4-1s-3 2-3 0" stroke="#fff3d8" fill="none" />
    <text x="23" y="593" fontFamily="DejaVu Sans" fontStyle="italic" fontWeight="bold" fontSize="9" fill="#fff">
      WWW.ICAX.ORG
    </text>
  </Brand>
);

const Status = () => (
  <StatusBar>
    <StatusIcon aria-label="模型树开关" $w={24} $box><TreeTabIcon /></StatusIcon>
    <StatusIcon aria-label="浏览器开关" $w={24} $box>
      <Icon><circle cx="8" cy="8" r="7" fill="#5fae4a" stroke="#2f6f8f" /><path d="M2 6c4-5 8 3 12-1v5c-4 4-8-3-11 1z" fill="#f2d63a" /></Icon>
    </StatusIcon>
    <StatusIcon aria-label="消息" $w={20}>
      <Icon w={10} h={12}><path d="M1 4h4V1l4 5-4 5V8H1z" fill="#1fc43c" stroke="#0c4a18" /></Icon>
    </StatusIcon>
    <StatusMessage>选择3个参考(例如曲面、曲线、边或点)以放置点。</StatusMessage>
    <StatusIcon aria-label="再生状态" $w={27}>
      <Icon w={25} h={12}>
        <circle cx="5" cy="6" r="5" fill="#c3c4c6" />
        <circle cx="15" cy="6" r="3" fill="#d9dadc" />
        <circle cx="22" cy="6" r="3" fill="#d9dadc" />
      </Icon>
    </StatusIcon>
    <StatusRule />
    <FindButton aria-label="查找"><Binoculars /></FindButton>
    <StatusRule />
    <SelectedCount>选择了 2 项</SelectedCount>
    <FilterBox>
      <FilterSelect aria-label="过滤器" defaultValue="全部">
        <option>全部</option>
      </FilterSelect>
      <FilterArrow><Down /></FilterArrow>
    </FilterBox>
  </StatusBar>
);

export default function App() {
  return (
    <>
      <GlobalStyle />
      <Window>
        <Frame>
          <Quick />
          <RibbonArea />
          <Workspace>
            <ModelTree />
            <Canvas>
              <Model />
              <ViewBar>
                {viewTools.map((v) => (
                  <ViewButton key={v.name} aria-label={v.name} $on={v.on}>
                    {v.icon}
                  </ViewButton>
                ))}
              </ViewBar>
            </Canvas>
          </Workspace>
          <Status />
        </Frame>
        <PlacementDialog />
        <BrandLogo />
      </Window>
    </>
  );
}
